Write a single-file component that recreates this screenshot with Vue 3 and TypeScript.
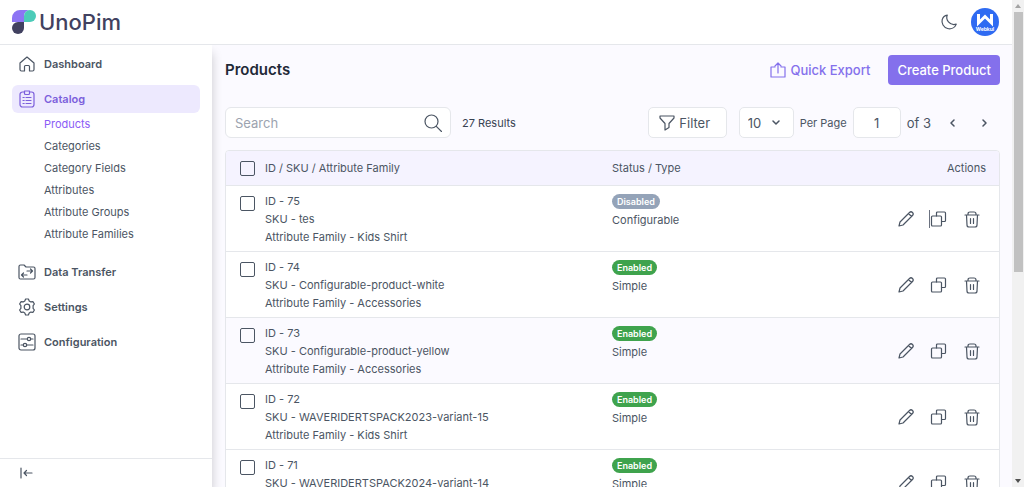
<script setup lang="ts">
import { ref } from 'vue'

interface Product {
  id: number
  sku: string
  family: string
  enabled: boolean
  type: string
}

const products: Product[] = [
  { id: 75, sku: 'tes', family: 'Kids Shirt', enabled: false, type: 'Configurable' },
  { id: 74, sku: 'Configurable-product-white', family: 'Accessories', enabled: true, type: 'Simple' },
  { id: 73, sku: 'Configurable-product-yellow', family: 'Accessories', enabled: true, type: 'Simple' },
  { id: 72, sku: 'WAVERIDERTSPACK2023-variant-15', family: 'Kids Shirt', enabled: true, type: 'Simple' },
  { id: 71, sku: 'WAVERIDERTSPACK2024-variant-14', family: 'Kids Shirt', enabled: true, type: 'Simple' },
]

const catalogLinks = ['Products', 'Categories', 'Category Fields', 'Attributes', 'Attribute Groups', 'Attribute Families']
const highlightedId = 73
const focusedId = 75

const search = ref('')
const perPage = ref('10')
const page = ref('1')
</script>

<template>
  <div class="window">
    <div class="app">
      <header class="topbar">
        <a class="logo" href="#" aria-label="UnoPim">
          <svg width="24" height="24" viewBox="0 0 24 24" aria-hidden="true">
            <path d="M8 0H18A6 6 0 0 0 12 6V12H0V8A8 8 0 0 1 8 0Z" fill="#8c74f4" />
            <path d="M18 0A6 6 0 0 1 18 12H12V6A6 6 0 0 1 18 0Z" fill="#4ccbb8" />
            <path d="M6 12H12V18A6 6 0 1 1 6 12Z" fill="#414160" />
          </svg>
          <span>UnoPim</span>
        </a>
        <div class="topbar-tools">
          <button class="icon-btn" aria-label="Dark mode">
            <svg width="18" height="18" viewBox="0 0 18 18"><path d="M7.300 2.100C5.400 6.400 9.300 13 16.200 11.200C14.800 14.800 11.200 16.500 7.600 15.500C3.500 14.400 1.200 10.300 2.200 6.700C2.900 4.300 4.800 2.500 7.300 2.100Z" /></svg>
          </button>
          <button class="avatar" aria-label="Webkul account">
            <svg width="28" height="28" viewBox="0 0 28 28">
              <circle cx="14" cy="14" r="14" fill="#2f6bf2" />
              <path d="M7.500 6V15L14 8.500L20.500 15V6" fill="none" stroke="#fff" stroke-width="3" />
              <text x="14" y="23" text-anchor="middle">Webkul</text>
            </svg>
          </button>
        </div>
      </header>

      <div class="body">
        <aside class="sidebar">
          <nav>
            <a class="nav-item" href="#">
              <svg width="18" height="18" viewBox="0 0 18 18"><path d="M2 8L9 2L16 8V14.500Q16 16 14.500 16H11.500V11.500Q11.500 10.500 10.500 10.500H7.500Q6.500 10.500 6.500 11.500V16H3.500Q2 16 2 14.500Z" /></svg>
              Dashboard
            </a>
            <a class="nav-item active" href="#">
              <svg width="18" height="18" viewBox="0 0 18 18"><rect x="2" y="2" width="14" height="15" rx="2.500" /><path fill="#ede9fe" d="M6.500 1H11.500V3.500Q11.500 4.500 10.500 4.500H7.500Q6.500 4.500 6.500 3.500Z" /><path d="M5 7.500H6.200M8 7.500H13M5 10.500H6.200M8 10.500H13M5 13.500H6.200M8 13.500H13" /></svg>
              Catalog
            </a>
            <ul class="subnav">
              <li v-for="(link, i) in catalogLinks" :key="link">
                <a href="#" :class="{ current: i === 0 }">{{ link }}</a>
              </li>
            </ul>
            <a class="nav-item" href="#">
              <svg width="18" height="18" viewBox="0 0 18 18"><path d="M1 3.500Q1 2 2.500 2H6L8 4H15.500Q17 4 17 5.500V14.500Q17 16 15.500 16H2.500Q1 16 1 14.500ZM9 8H14.500M12.500 6L14.500 8L12.500 10M9 12H3.500M5.500 10L3.500 12L5.500 14" /></svg>
              Data Transfer
            </a>
            <a class="nav-item" href="#">
              <svg width="18" height="18" viewBox="0 0 18 18"><circle cx="9" cy="9" r="2.800" /><path d="M7.600 1H10.400L11.200 3L12.800 3.900L14.900 3.600L16.400 6L15.100 7.700V10.300L16.400 12L14.900 14.400L12.800 14.100L11.200 15L10.400 17H7.600L6.800 15L5.200 14.100L3.100 14.400L1.600 12L2.900 10.300V7.700L1.600 6L3.100 3.600L5.200 3.900L6.800 3Z" /></svg>
              Settings
            </a>
            <a class="nav-item" href="#">
              <svg width="18" height="18" viewBox="0 0 18 18"><rect x="1" y="1" width="16" height="16" rx="2" /><circle cx="11" cy="6" r="1.700" /><circle cx="7" cy="12" r="1.700" /><path d="M3 6H9.300M12.700 6H15M3 12H5.300M8.700 12H15" /></svg>
              Configuration
            </a>
          </nav>
          <button class="collapse" aria-label="Collapse menu">
            <svg width="14" height="12" viewBox="0 0 14 12"><path d="M2 1V11M13 6H5M7.500 3.500L5 6L7.500 8.500" /></svg>
          </button>
        </aside>

        <main class="main">
          <div class="heading">
            <h1>Products</h1>
            <div class="heading-actions">
              <button class="export">
                <svg width="16" height="16" viewBox="0 0 16 16"><path d="M5 5H1V15H15V5H11M8 11V1M5 4L8 1L11 4" /></svg>
                Quick Export
              </button>
              <button class="create">Create Product</button>
            </div>
          </div>

          <div class="toolbar">
            <div class="search">
              <input v-model="search" type="text" placeholder="Search" aria-label="Search" />
              <svg width="18" height="18" viewBox="0 0 18 18"><circle cx="7.500" cy="7.500" r="6.500" /><path d="M12.300 12.300L17.500 17.500" /></svg>
            </div>
            <span class="results">27 Results</span>
            <div class="pager">
              <button class="filter">
                <svg width="16" height="16" viewBox="0 0 16 16"><path d="M1 1H15V3L10 8.500V12.500L6 15V8.500L1 3Z" /></svg>
                Filter
              </button>
              <div class="per-page">
                <select id="per-page" v-model="perPage">
                  <option>10</option>
                  <option>20</option>
                  <option>50</option>
                </select>
                <svg width="10" height="6" viewBox="0 0 10 6"><path d="M2 1L5 4L8 1" /></svg>
              </div>
              <label class="per-label" for="per-page">Per Page</label>
              <input v-model="page" class="page" type="text" aria-label="Page" />
              <span class="total">of 3</span>
              <button class="step" aria-label="Previous page"><svg width="6" height="10" viewBox="0 0 6 10"><path d="M5 2L2 5L5 8" /></svg></button>
              <button class="step" aria-label="Next page"><svg width="6" height="10" viewBox="0 0 6 10"><path d="M1 2L4 5L1 8" /></svg></button>
            </div>
          </div>

          <div class="grid">
            <table>
              <thead>
                <tr>
                  <th class="check"><input type="checkbox" aria-label="Select all" /></th>
                  <th>ID / SKU / Attribute Family</th>
                  <th class="status">Status / Type</th>
                  <th class="actions">Actions</th>
                </tr>
              </thead>
              <tbody>
                <tr v-for="p in products" :key="p.id" :class="{ highlighted: p.id === highlightedId }">
                  <td class="check"><input type="checkbox" :aria-label="`Select product ${p.id}`" /></td>
                  <td>
                    <p>ID - {{ p.id }}</p>
                    <p>SKU - {{ p.sku }}</p>
                    <p>Attribute Family - {{ p.family }}</p>
                  </td>
                  <td class="status">
                    <span class="badge" :class="{ on: p.enabled }">{{ p.enabled ? 'Enabled' : 'Disabled' }}</span>
                    <p>{{ p.type }}</p>
                  </td>
                  <td class="actions">
                    <div class="row-actions">
                      <button aria-label="Edit"><svg width="18" height="18" viewBox="0 0 18 18"><path d="M2 16L3 12L12.500 2.500Q14 1 15.500 2.500Q17 4 15.500 5.500L6 15ZM11.500 3.500L14.500 6.500" /></svg></button>
                      <button :class="{ caret: p.id === focusedId }" aria-label="Copy"><svg width="18" height="18" viewBox="0 0 18 18"><path d="M6.500 6V3Q6.500 2 7.500 2H14.500Q15.500 2 15.500 3V10.500Q15.500 11.500 14.500 11.500H11.500" /><rect x="1.500" y="6" width="10" height="10" rx="1" /></svg></button>
                      <button aria-label="Delete"><svg width="18" height="18" viewBox="0 0 18 18"><path d="M2 5H16M5 5V4Q5 2 7 2H11Q13 2 13 4V5M3.500 5L4 15Q4 17 6 17H12Q14 17 14 15L14.500 5M7.500 8.500V13.500M10.500 8.500V13.500" /></svg></button>
                    </div>
                  </td>
                </tr>
              </tbody>
            </table>
          </div>
        </main>
      </div>
    </div>

    <div class="scrollbar" aria-hidden="true">
      <span class="arrow up"></span>
      <span class="thumb"></span>
      <span class="arrow down"></span>
    </div>
  </div>
</template>

<style>
body {
  overflow: hidden;
}
</style>

<style scoped>
* {
  box-sizing: border-box;
}

.window {
  display: flex;
  height: 100vh;
  font-family: Inter, sans-serif;
  font-size: 11px;
  line-height: 18px;
  color: #4b5563;
}

.app {
  flex: 1;
  min-width: 0;
  display: flex;
  flex-direction: column;
}

svg {
  display: block;
  flex: none;
  fill: none;
  stroke: currentColor;
  stroke-width: 1.2;
  stroke-linecap: round;
  stroke-linejoin: round;
}

button,
input,
select {
  font: inherit;
  color: inherit;
}

button {
  padding: 0;
  border: 0;
  background: none;
}

a {
  color: inherit;
  text-decoration: none;
}

.topbar {
  flex: none;
  height: 45px;
  padding: 0 13px 0 12px;
  display: flex;
  align-items: center;
  justify-content: space-between;
  border-bottom: 1px solid #e5e7eb;
  background: #fff;
}

.logo {
  display: flex;
  align-items: center;
  gap: 3px;
  font-size: 22px;
  font-weight: 500;
  line-height: 28px;
  color: #414160;
}

.logo svg {
  stroke: none;
}

.topbar-tools {
  display: flex;
  align-items: center;
  gap: 13px;
}

.avatar path {
  stroke-linecap: butt;
  stroke-linejoin: miter;
}

.avatar circle {
  stroke: none;
}

.avatar text {
  font-size: 5px;
  font-weight: 700;
  fill: #fff;
  stroke: none;
}

.body {
  flex: 1;
  min-height: 0;
  display: flex;
  background: #fbfaff;
}

.sidebar {
  flex: none;
  width: 212px;
  display: flex;
  flex-direction: column;
  justify-content: space-between;
  background: #fff;
  box-shadow: 0 8px 10px rgba(0, 0, 0, 0.2);
  clip-path: inset(0 -12px 0 0);
}

nav {
  display: flex;
  flex-direction: column;
  gap: 7px;
  padding: 5px 12px 0;
}

.nav-item {
  height: 28px;
  padding: 0 6px;
  display: flex;
  align-items: center;
  gap: 8px;
  border-radius: 6px;
  font-weight: 600;
}

.nav-item.active {
  background: #ede9fe;
  color: #7c5fdc;
}

.subnav {
  margin: -7px 0 0;
  padding: 0 0 6px 32px;
  list-style: none;
  line-height: 22px;
}

.subnav .current {
  color: #8b5cf6;
}

.collapse {
  height: 29px;
  padding: 0 19px;
  border-top: 1px solid #e5e7eb;
}

.main {
  flex: 1;
  min-width: 0;
  padding: 10px 12px 0 13px;
  overflow: hidden;
}

.heading {
  display: flex;
  align-items: center;
  justify-content: space-between;
}

h1 {
  margin: 0;
  font-size: 15px;
  font-weight: 600;
  line-height: 24px;
  color: #1f2937;
}

.heading-actions {
  display: flex;
  gap: 18px;
}

.export,
.create {
  height: 30px;
  display: flex;
  align-items: center;
  gap: 4px;
  font-size: 13px;
  font-weight: 500;
}

.export {
  color: #8470ec;
}

.create {
  padding: 0 9px;
  border-radius: 4px;
  background: #8470ec;
  color: #fff;
}

.toolbar {
  display: flex;
  align-items: center;
  margin: 22px 0 12px;
}

.search {
  display: flex;
  align-items: center;
  width: 226px;
  height: 31px;
  padding: 0 8px 0 9px;
  border: 1px solid #e5e7eb;
  border-radius: 6px;
  background: #fff;
}

.search input {
  flex: 1;
  min-width: 0;
  padding: 0;
  border: 0;
  outline: 0;
  font-size: 13px;
}

.search input::placeholder {
  color: #9ca3af;
}

.results {
  margin-left: 11px;
  color: #374151;
}

.pager {
  display: flex;
  align-items: center;
  margin-left: auto;
}

.filter,
.per-page select,
.page {
  height: 31px;
  border: 1px solid #e5e7eb;
  border-radius: 5px;
  background: #fff;
  font-size: 13px;
}

.filter {
  width: 79px;
  padding-right: 5px;
  display: flex;
  align-items: center;
  justify-content: center;
  gap: 4px;
}

.per-page {
  display: grid;
  align-items: center;
  margin: 0 6px 0 12px;
}

.per-page select,
.per-page svg {
  grid-area: 1 / 1;
}

.per-page select {
  width: 55px;
  padding: 0 8px;
  appearance: none;
}

.per-page svg {
  justify-self: end;
  margin-right: 13px;
  pointer-events: none;
}

.page {
  width: 48px;
  margin: 0 6px;
  padding: 0;
  text-align: center;
}

.total {
  font-size: 13px;
  margin-right: 12px;
}

.step {
  width: 18px;
  height: 18px;
  display: grid;
  place-items: center;
}

.step + .step {
  margin: 0 6px 0 15px;
}

.step svg,
.per-page svg {
  stroke-width: 1.5;
}

.grid {
  border: 1px solid #e5e7eb;
  border-radius: 4px;
  background: #fff;
  overflow: hidden;
}

table {
  width: 100%;
  table-layout: fixed;
  border-collapse: separate;
  border-spacing: 0;
}

th {
  height: 35px;
  padding: 0;
  border-bottom: 1px solid #e5e7eb;
  background: #f5f3ff;
  font-weight: 400;
  text-align: left;
}

td {
  padding: 6px 0 5px;
  border-bottom: 1px solid #e5e7eb;
  vertical-align: top;
}

.highlighted td {
  background: #fbfaff;
}

p {
  margin: 0;
}

.check {
  width: 39px;
  padding-left: 14px;
}

.check input {
  display: block;
  width: 15px;
  height: 15px;
  margin: 0;
  appearance: none;
  border: 1px solid #4b5563;
  border-radius: 2px;
  background: transparent;
}

td.check input {
  margin-top: 4px;
}

.status {
  width: 180px;
}

.badge {
  display: block;
  width: fit-content;
  height: 15px;
  margin: 2px 0;
  padding: 0 5px;
  border-radius: 8px;
  background: #94a3b8;
  color: #fff;
  font-size: 9px;
  font-weight: 600;
  line-height: 15px;
}

.badge.on {
  background: #3fa34d;
}

.actions {
  width: 207px;
  padding-right: 13px;
  text-align: right;
}

td.actions {
  vertical-align: middle;
}

.row-actions {
  display: flex;
  justify-content: flex-end;
  gap: 15px;
  padding-right: 5px;
}

.caret {
  box-shadow: -1px 0 #6b7280;
}

.scrollbar {
  flex: none;
  width: 12px;
  display: flex;
  flex-direction: column;
  align-items: center;
  background: #f1f1f1;
}

.thumb {
  width: 9px;
  height: 260px;
  background: #c1c1c1;
}

.arrow {
  margin: 4px 0;
  border: 3px solid transparent;
}

.up {
  border-top: 0;
  border-bottom: 4px solid #a3a3a3;
}

.down {
  margin-top: auto;
  border-bottom: 0;
  border-top: 4px solid #505050;
}
</style>
